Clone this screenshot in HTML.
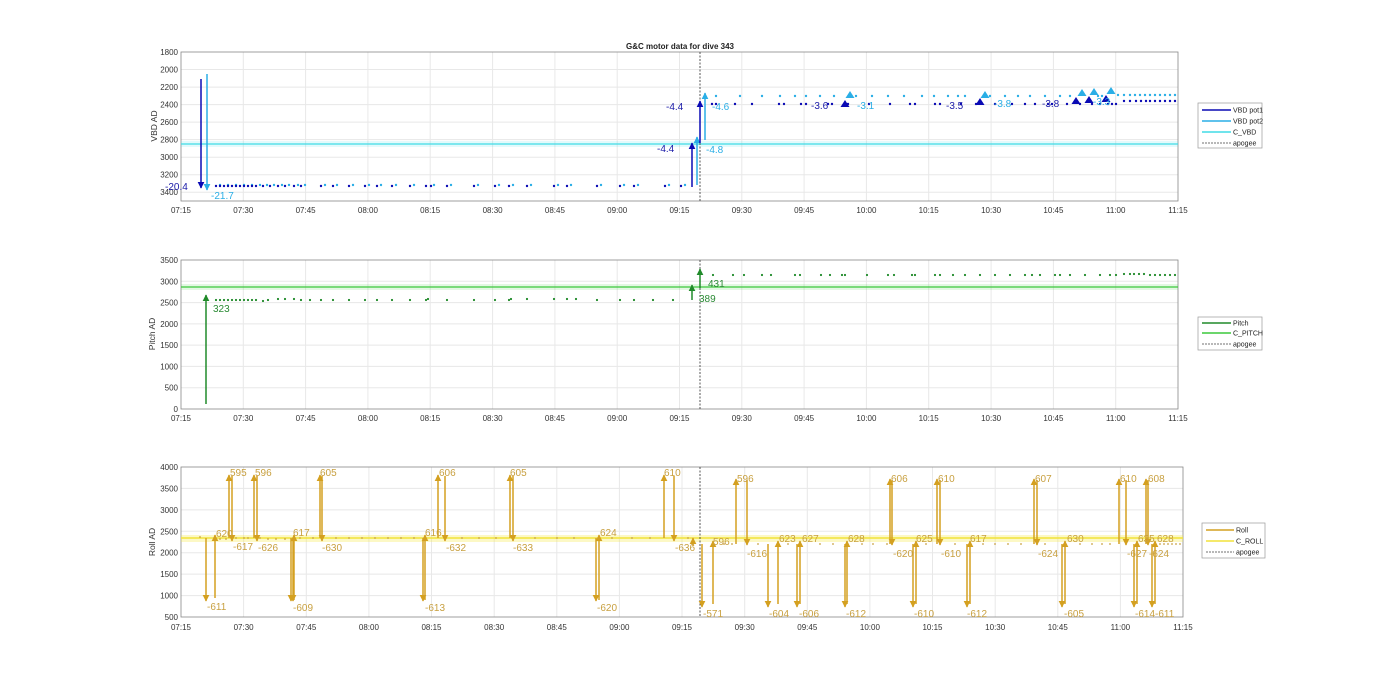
<!DOCTYPE html>
<html><head><meta charset="utf-8"><style>
html,body{margin:0;padding:0;background:#fff;}
svg{display:block;font-family:"Liberation Sans",Arial,sans-serif;}
</style></head><body>
<svg width="1400" height="693" viewBox="0 0 1400 693" xmlns="http://www.w3.org/2000/svg">
<defs>
<marker id="mb" viewBox="0 0 10 10" refX="9" refY="5" markerWidth="4.5" markerHeight="4.5" orient="auto"><path d="M0,0L10,5L0,10z" fill="#0a0ab4"/></marker>
<marker id="mc" viewBox="0 0 10 10" refX="9" refY="5" markerWidth="4.5" markerHeight="4.5" orient="auto"><path d="M0,0L10,5L0,10z" fill="#2aaee6"/></marker>
<marker id="mg" viewBox="0 0 10 10" refX="9" refY="5" markerWidth="4.5" markerHeight="4.5" orient="auto"><path d="M0,0L10,5L0,10z" fill="#208a2a"/></marker>
<marker id="mo" viewBox="0 0 10 10" refX="9" refY="5" markerWidth="4.5" markerHeight="4.5" orient="auto"><path d="M0,0L10,5L0,10z" fill="#d4a020"/></marker>
</defs>
<rect width="1400" height="693" fill="#fff"/>
<text x="680" y="49" font-size="8" font-weight="bold" text-anchor="middle" fill="#222">G&amp;C motor data for dive 343</text>

<!-- ===== PLOT 1 ===== -->
<g stroke="#e8e8e8" stroke-width="1" fill="none">
<path d="M243.3,52V201M305.6,52V201M367.9,52V201M430.2,52V201M492.6,52V201M554.9,52V201M617.2,52V201M679.5,52V201M741.8,52V201M804.1,52V201M866.4,52V201M928.7,52V201M991.1,52V201M1053.4,52V201M1115.7,52V201"/>
<path d="M181,69.5H1178M181,87.1H1178M181,104.6H1178M181,122.1H1178M181,139.6H1178M181,157.2H1178M181,174.7H1178M181,192.2H1178"/>
</g>
<rect x="181" y="52" width="997" height="149" fill="none" stroke="#888" stroke-width="0.8"/>
<g font-size="8" fill="#333" text-anchor="end">
<text x="178" y="55">1800</text><text x="178" y="72.5">2000</text><text x="178" y="90">2200</text><text x="178" y="107.5">2400</text><text x="178" y="125">2600</text><text x="178" y="142.5">2800</text><text x="178" y="160">3000</text><text x="178" y="177.5">3200</text><text x="178" y="195">3400</text>
</g>
<g font-size="8" fill="#333" text-anchor="middle">
<text x="181" y="213">07:15</text><text x="243.3" y="213">07:30</text><text x="305.6" y="213">07:45</text><text x="367.9" y="213">08:00</text><text x="430.2" y="213">08:15</text><text x="492.6" y="213">08:30</text><text x="554.9" y="213">08:45</text><text x="617.2" y="213">09:00</text><text x="679.5" y="213">09:15</text><text x="741.8" y="213">09:30</text><text x="804.1" y="213">09:45</text><text x="866.4" y="213">10:00</text><text x="928.7" y="213">10:15</text><text x="991.1" y="213">10:30</text><text x="1053.4" y="213">10:45</text><text x="1115.7" y="213">11:00</text><text x="1178" y="213">11:15</text>
</g>
<text transform="translate(157,126) rotate(-90)" font-size="8.5" fill="#333" text-anchor="middle">VBD AD</text>
<rect x="181" y="141" width="997" height="6" fill="#40e0e8" opacity="0.15"/>
<line x1="181" y1="144" x2="1178" y2="144" stroke="#40dce6" stroke-width="1.3"/>
<line x1="700" y1="52" x2="700" y2="201" stroke="#444" stroke-width="0.9" stroke-dasharray="2,1.5"/>
<!-- dots pot2 -->
<path stroke="#2aaee6" stroke-width="2.4" stroke-linecap="round" fill="none" d="M220,185h0M228,185h0M236,185h0M244,185h0M252,185h0M260,185h0M267,185h0M274,185h0M282,185h0M289,185h0M298,185h0M305,185h0M325,185h0M337,185h0M353,185h0M369,185h0M381,185h0M396,185h0M414,185h0M434,185h0M451,185h0M478,185h0M499,185h0M513,185h0M531,185h0M558,185h0M571,185h0M601,185h0M624,185h0M638,185h0M669,185h0M685,185h0M716,96h0M740,96h0M762,96h0M780,96h0M795,96h0M806,96h0M820,96h0M834,96h0M856,96h0M872,96h0M888,96h0M904,96h0M922,96h0M934,96h0M948,96h0M958,96h0M965,96h0M990,96h0M1005,96h0M1018,96h0M1030,96h0M1045,96h0M1060,96h0M1070,96h0M1098,96h0M1102,96h0M1118,95h0M1124,95h0M1130,95h0M1135,95h0M1140,95h0M1145,95h0M1150,95h0M1155,95h0M1160,95h0M1165,95h0M1170,95h0M1175,95h0"/>
<!-- dots pot1 -->
<path stroke="#0a0ab4" stroke-width="2.4" stroke-linecap="round" fill="none" d="M216,186h0M220,186h0M224,186h0M228,186h0M232,186h0M236,186h0M240,186h0M244,186h0M248,186h0M252,186h0M256,186h0M263,186h0M270,186h0M278,186h0M285,186h0M294,186h0M301,186h0M321,186h0M333,186h0M349,186h0M365,186h0M377,186h0M392,186h0M410,186h0M426,186h0M431,186h0M447,186h0M474,186h0M495,186h0M509,186h0M527,186h0M554,186h0M567,186h0M597,186h0M620,186h0M634,186h0M665,186h0M681,186h0M712,104h0M716,104h0M735,104h0M752,104h0M779,104h0M784,104h0M801,104h0M806,104h0M828,104h0M832,104h0M848,104h0M869,104h0M890,104h0M910,104h0M915,104h0M935,104h0M940,104h0M961,104h0M976,104h0M995,104h0M1012,104h0M1025,104h0M1035,104h0M1048,104h0M1052,104h0M1067,104h0M1080,104h0M1092,104h0M1100,104h0M1108,104h0M1112,104h0M1116,104h0M1124,101h0M1130,101h0M1136,101h0M1141,101h0M1146,101h0M1150,101h0M1155,101h0M1160,101h0M1165,101h0M1170,101h0M1175,101h0"/>
<!-- triangles -->
<g fill="#2aaee6"><path d="M850,91l-4.5,7h9z"/><path d="M985,91l-4.5,7h9z"/><path d="M1082,89l-4.5,7h9z"/><path d="M1094,88l-4.5,7h9z"/><path d="M1111,87l-4.5,7h9z"/></g>
<g fill="#0a0ab4"><path d="M845,100l-4.5,7h9z"/><path d="M980,98l-4.5,7h9z"/><path d="M1076,97l-4.5,7h9z"/><path d="M1089,96l-4.5,7h9z"/><path d="M1106,95l-4.5,7h9z"/></g>
<!-- arrows -->
<g stroke-width="1.5" fill="none">
<line x1="201" y1="79" x2="201" y2="188" stroke="#0a0ab4" marker-end="url(#mb)"/>
<line x1="207" y1="74" x2="207" y2="190" stroke="#2aaee6" marker-end="url(#mc)"/>
<line x1="692" y1="187" x2="692" y2="143" stroke="#0a0ab4" marker-end="url(#mb)"/>
<line x1="697" y1="185" x2="697" y2="137" stroke="#2aaee6" marker-end="url(#mc)"/>
<line x1="700" y1="143" x2="700" y2="101" stroke="#0a0ab4" marker-end="url(#mb)"/>
<line x1="705" y1="140" x2="705" y2="93" stroke="#2aaee6" marker-end="url(#mc)"/>
</g>
<g font-size="10">
<text x="165" y="190" fill="#1a1aa8">-20.4</text>
<text x="211" y="199" fill="#2aaee6">-21.7</text>
<text x="657" y="152" fill="#1a1aa8">-4.4</text>
<text x="666" y="110" fill="#1a1aa8">-4.4</text>
<text x="712" y="110" fill="#2aaee6">-4.6</text>
<text x="706" y="153" fill="#2aaee6">-4.8</text>
<text x="811" y="109" fill="#1a1aa8">-3.6</text>
<text x="857" y="109" fill="#2aaee6">-3.1</text>
<text x="946" y="109" fill="#1a1aa8">-3.5</text>
<text x="994" y="107" fill="#2aaee6">-3.8</text>
<text x="1042" y="107" fill="#1a1aa8">-3.8</text>
<text x="1093" y="105" fill="#2aaee6">-3.3</text>
</g>
<!-- legend 1 -->
<rect x="1198" y="103" width="64" height="45" fill="#fff" stroke="#999" stroke-width="0.7"/>
<g stroke-width="1.4"><line x1="1202" y1="110" x2="1231" y2="110" stroke="#0a0ab4"/><line x1="1202" y1="121" x2="1231" y2="121" stroke="#2aaee6"/><line x1="1202" y1="132" x2="1231" y2="132" stroke="#40dce6"/><line x1="1202" y1="143" x2="1231" y2="143" stroke="#444" stroke-width="0.8" stroke-dasharray="2,1"/></g>
<g font-size="7" fill="#222"><text x="1233" y="112.5">VBD pot1</text><text x="1233" y="123.5">VBD pot2</text><text x="1233" y="134.5">C_VBD</text><text x="1233" y="145.5">apogee</text></g>

<!-- ===== PLOT 2 ===== -->
<g stroke="#e8e8e8" stroke-width="1" fill="none">
<path d="M243.3,260V409M305.6,260V409M367.9,260V409M430.2,260V409M492.6,260V409M554.9,260V409M617.2,260V409M679.5,260V409M741.8,260V409M804.1,260V409M866.4,260V409M928.7,260V409M991.1,260V409M1053.4,260V409M1115.7,260V409"/>
<path d="M181,281.3H1178M181,302.6H1178M181,323.9H1178M181,345.1H1178M181,366.4H1178M181,387.7H1178"/>
</g>
<rect x="181" y="260" width="997" height="149" fill="none" stroke="#888" stroke-width="0.8"/>
<g font-size="8" fill="#333" text-anchor="end">
<text x="178" y="263">3500</text><text x="178" y="284.3">3000</text><text x="178" y="305.6">2500</text><text x="178" y="326.9">2000</text><text x="178" y="348.1">1500</text><text x="178" y="369.4">1000</text><text x="178" y="390.7">500</text><text x="178" y="412">0</text>
</g>
<g font-size="8" fill="#333" text-anchor="middle">
<text x="181" y="421">07:15</text><text x="243.3" y="421">07:30</text><text x="305.6" y="421">07:45</text><text x="367.9" y="421">08:00</text><text x="430.2" y="421">08:15</text><text x="492.6" y="421">08:30</text><text x="554.9" y="421">08:45</text><text x="617.2" y="421">09:00</text><text x="679.5" y="421">09:15</text><text x="741.8" y="421">09:30</text><text x="804.1" y="421">09:45</text><text x="866.4" y="421">10:00</text><text x="928.7" y="421">10:15</text><text x="991.1" y="421">10:30</text><text x="1053.4" y="421">10:45</text><text x="1115.7" y="421">11:00</text><text x="1178" y="421">11:15</text>
</g>
<text transform="translate(155,334) rotate(-90)" font-size="8.5" fill="#333" text-anchor="middle">Pitch AD</text>
<rect x="181" y="284" width="997" height="6" fill="#40d040" opacity="0.15"/>
<line x1="181" y1="287" x2="1178" y2="287" stroke="#3cc83c" stroke-width="1.3"/>
<line x1="700" y1="260" x2="700" y2="409" stroke="#444" stroke-width="0.9" stroke-dasharray="2,1.5"/>
<path stroke="#208a2a" stroke-width="2.2" stroke-linecap="round" fill="none" d="M216,300h0M220,300h0M224,300h0M228,300h0M232,300h0M236,300h0M240,300h0M244,300h0M248,300h0M252,300h0M256,300h0M263,301h0M268,300h0M278,299h0M285,299h0M294,299h0M301,300h0M310,300h0M321,300h0M333,300h0M349,300h0M365,300h0M377,300h0M392,300h0M410,300h0M426,300h0M428,299h0M447,300h0M474,300h0M495,300h0M509,300h0M511,299h0M527,299h0M554,299h0M567,299h0M576,299h0M597,300h0M620,300h0M634,300h0M653,300h0M673,300h0M713,275h0M733,275h0M744,275h0M762,275h0M771,275h0M795,275h0M800,275h0M821,275h0M830,275h0M842,275h0M845,275h0M867,275h0M888,275h0M894,275h0M912,275h0M915,275h0M935,275h0M940,275h0M953,275h0M965,275h0M980,275h0M995,275h0M1010,275h0M1025,275h0M1032,275h0M1040,275h0M1055,275h0M1060,275h0M1070,275h0M1085,275h0M1100,275h0M1110,275h0M1116,275h0M1124,274h0M1130,274h0M1134,274h0M1139,274h0M1144,274h0M1150,275h0M1155,275h0M1160,275h0M1165,275h0M1170,275h0M1175,275h0"/>
<g stroke-width="1.5" fill="none" stroke="#208a2a">
<line x1="206" y1="404" x2="206" y2="295" marker-end="url(#mg)"/>
<line x1="692" y1="300" x2="692" y2="285" marker-end="url(#mg)"/>
<line x1="700" y1="288" x2="700" y2="269" marker-end="url(#mg)"/>
</g>
<g font-size="10" fill="#2a8a34"><text x="213" y="312">323</text><text x="699" y="302">389</text><text x="708" y="287">431</text></g>
<rect x="1198" y="317" width="64" height="33" fill="#fff" stroke="#999" stroke-width="0.7"/>
<g stroke-width="1.4"><line x1="1202" y1="323" x2="1231" y2="323" stroke="#208a2a"/><line x1="1202" y1="333" x2="1231" y2="333" stroke="#3cc83c"/><line x1="1202" y1="344" x2="1231" y2="344" stroke="#444" stroke-width="0.8" stroke-dasharray="2,1"/></g>
<g font-size="7" fill="#222"><text x="1233" y="325.5">Pitch</text><text x="1233" y="335.5">C_PITCH</text><text x="1233" y="346.5">apogee</text></g>

<!-- ===== PLOT 3 ===== -->
<g stroke="#e8e8e8" stroke-width="1" fill="none">
<path d="M243.6,467V617M306.3,467V617M368.9,467V617M431.5,467V617M494.2,467V617M556.8,467V617M619.4,467V617M682,467V617M744.7,467V617M807.3,467V617M869.9,467V617M932.5,467V617M995.2,467V617M1057.8,467V617M1120.4,467V617"/>
<path d="M181,488.4H1183M181,509.9H1183M181,531.3H1183M181,552.7H1183M181,574.1H1183M181,595.6H1183"/>
</g>
<rect x="181" y="467" width="1002" height="150" fill="none" stroke="#888" stroke-width="0.8"/>
<g font-size="8" fill="#333" text-anchor="end">
<text x="178" y="470">4000</text><text x="178" y="491.4">3500</text><text x="178" y="512.9">3000</text><text x="178" y="534.3">2500</text><text x="178" y="555.7">2000</text><text x="178" y="577.1">1500</text><text x="178" y="598.6">1000</text><text x="178" y="620">500</text>
</g>
<g font-size="8" fill="#333" text-anchor="middle">
<text x="181" y="630">07:15</text><text x="243.6" y="630">07:30</text><text x="306.3" y="630">07:45</text><text x="368.9" y="630">08:00</text><text x="431.5" y="630">08:15</text><text x="494.2" y="630">08:30</text><text x="556.8" y="630">08:45</text><text x="619.4" y="630">09:00</text><text x="682" y="630">09:15</text><text x="744.7" y="630">09:30</text><text x="807.3" y="630">09:45</text><text x="869.9" y="630">10:00</text><text x="932.5" y="630">10:15</text><text x="995.2" y="630">10:30</text><text x="1057.8" y="630">10:45</text><text x="1120.4" y="630">11:00</text><text x="1183" y="630">11:15</text>
</g>
<text transform="translate(155,542) rotate(-90)" font-size="8.5" fill="#333" text-anchor="middle">Roll AD</text>
<rect x="181" y="535" width="1002" height="7" fill="#f5e840" opacity="0.3"/>
<line x1="181" y1="538" x2="1183" y2="538" stroke="#f2e23a" stroke-width="1.4"/>
<line x1="700" y1="467" x2="700" y2="617" stroke="#444" stroke-width="0.9" stroke-dasharray="2,1.5"/>
<path stroke="#c8a040" stroke-width="1.8" stroke-linecap="round" fill="none" d="M200,537h0M220,539h0M226,539h0M236,538h0M244,538h0M248,538h0M260,538h0M268,539h0M276,539h0M285,539h0M300,538h0M313,538h0M336,538h0M349,538h0M362,538h0M375,538h0M388,538h0M401,538h0M414,538h0M462,538h0M479,538h0M496,538h0M535,538h0M557,538h0M574,538h0M612,538h0M632,538h0M650,538h0M688,538h0M724,544h0M732,544h0M758,544h0M788,544h0M820,544h0M833,544h0M862,544h0M873,544h0M887,544h0M926,544h0M955,544h0M983,544h0M995,544h0M1008,544h0M1021,544h0M1045,544h0M1080,544h0M1092,544h0M1102,544h0M1110,544h0M1160,544h0M1164,544h0M1168,544h0M1172,544h0M1176,544h0M1180,544h0"/>
<g stroke="#d4a020" stroke-width="1.5" fill="none" marker-end="url(#mo)">
<line x1="206" y1="538" x2="206" y2="601"/>
<line x1="215" y1="598" x2="215" y2="535"/>
<line x1="229" y1="538" x2="229" y2="475"/>
<line x1="232" y1="476" x2="232" y2="541"/>
<line x1="254" y1="538" x2="254" y2="475"/>
<line x1="257" y1="476" x2="257" y2="541"/>
<line x1="291" y1="538" x2="291" y2="601"/>
<line x1="293" y1="538" x2="293" y2="601"/>
<line x1="294" y1="600" x2="294" y2="535"/>
<line x1="320" y1="538" x2="320" y2="475"/>
<line x1="322" y1="476" x2="322" y2="541"/>
<line x1="423" y1="538" x2="423" y2="601"/>
<line x1="425" y1="600" x2="425" y2="535"/>
<line x1="438" y1="538" x2="438" y2="475"/>
<line x1="445" y1="476" x2="445" y2="541"/>
<line x1="510" y1="538" x2="510" y2="475"/>
<line x1="513" y1="476" x2="513" y2="541"/>
<line x1="596" y1="538" x2="596" y2="601"/>
<line x1="599" y1="600" x2="599" y2="535"/>
<line x1="664" y1="538" x2="664" y2="475"/>
<line x1="674" y1="476" x2="674" y2="541"/>
<line x1="693" y1="546" x2="693" y2="538"/>
<line x1="702" y1="544" x2="702" y2="607"/>
<line x1="713" y1="604" x2="713" y2="541"/>
<line x1="736" y1="544" x2="736" y2="479"/>
<line x1="747" y1="480" x2="747" y2="545"/>
<line x1="768" y1="544" x2="768" y2="607"/>
<line x1="778" y1="604" x2="778" y2="541"/>
<line x1="797" y1="544" x2="797" y2="607"/>
<line x1="800" y1="604" x2="800" y2="541"/>
<line x1="845" y1="544" x2="845" y2="607"/>
<line x1="847" y1="604" x2="847" y2="541"/>
<line x1="890" y1="544" x2="890" y2="479"/>
<line x1="892" y1="480" x2="892" y2="545"/>
<line x1="913" y1="544" x2="913" y2="607"/>
<line x1="916" y1="604" x2="916" y2="541"/>
<line x1="937" y1="544" x2="937" y2="479"/>
<line x1="940" y1="480" x2="940" y2="545"/>
<line x1="967" y1="544" x2="967" y2="607"/>
<line x1="970" y1="604" x2="970" y2="541"/>
<line x1="1034" y1="544" x2="1034" y2="479"/>
<line x1="1037" y1="480" x2="1037" y2="545"/>
<line x1="1062" y1="544" x2="1062" y2="607"/>
<line x1="1065" y1="604" x2="1065" y2="541"/>
<line x1="1119" y1="544" x2="1119" y2="479"/>
<line x1="1126" y1="480" x2="1126" y2="545"/>
<line x1="1134" y1="544" x2="1134" y2="607"/>
<line x1="1137" y1="604" x2="1137" y2="541"/>
<line x1="1146" y1="544" x2="1146" y2="479"/>
<line x1="1148" y1="480" x2="1148" y2="545"/>
<line x1="1152" y1="544" x2="1152" y2="607"/>
<line x1="1155" y1="604" x2="1155" y2="541"/>
</g>
<g font-size="10" fill="#c8a040">
<text x="207" y="610">-611</text><text x="216" y="537">620</text><text x="230" y="476">595</text><text x="233" y="550">-617</text>
<text x="255" y="476">596</text><text x="258" y="551">-626</text><text x="293" y="611">-609</text><text x="293" y="536">617</text>
<text x="320" y="476">605</text><text x="322" y="551">-630</text><text x="425" y="611">-613</text><text x="425" y="536">616</text>
<text x="439" y="476">606</text><text x="446" y="551">-632</text><text x="510" y="476">605</text><text x="513" y="551">-633</text>
<text x="597" y="611">-620</text><text x="600" y="536">624</text><text x="664" y="476">610</text><text x="675" y="551">-636</text>
<text x="703" y="617">-571</text><text x="713" y="545">596</text><text x="737" y="482">596</text><text x="747" y="557">-616</text>
<text x="769" y="617">-604</text><text x="779" y="542">623</text><text x="799" y="617">-606</text><text x="802" y="542">627</text>
<text x="846" y="617">-612</text><text x="848" y="542">628</text><text x="891" y="482">606</text><text x="893" y="557">-620</text>
<text x="914" y="617">-610</text><text x="916" y="542">625</text><text x="938" y="482">610</text><text x="941" y="557">-610</text>
<text x="967" y="617">-612</text><text x="970" y="542">617</text><text x="1035" y="482">607</text><text x="1038" y="557">-624</text>
<text x="1064" y="617">-605</text><text x="1067" y="542">630</text><text x="1120" y="482">610</text><text x="1127" y="557">-627</text>
<text x="1135" y="617">-614</text><text x="1138" y="542">635</text><text x="1148" y="482">608</text><text x="1149" y="557">-624</text>
<text x="1155" y="617">-611</text><text x="1157" y="542">628</text>
</g>
<rect x="1202" y="523" width="63" height="35" fill="#fff" stroke="#999" stroke-width="0.7"/>
<g stroke-width="1.4"><line x1="1206" y1="530" x2="1234" y2="530" stroke="#d4a020"/><line x1="1206" y1="541" x2="1234" y2="541" stroke="#f2e23a"/><line x1="1206" y1="552" x2="1234" y2="552" stroke="#444" stroke-width="0.8" stroke-dasharray="2,1"/></g>
<g font-size="7" fill="#222"><text x="1236" y="532.5">Roll</text><text x="1236" y="543.5">C_ROLL</text><text x="1236" y="554.5">apogee</text></g>
</svg>
</body></html>
